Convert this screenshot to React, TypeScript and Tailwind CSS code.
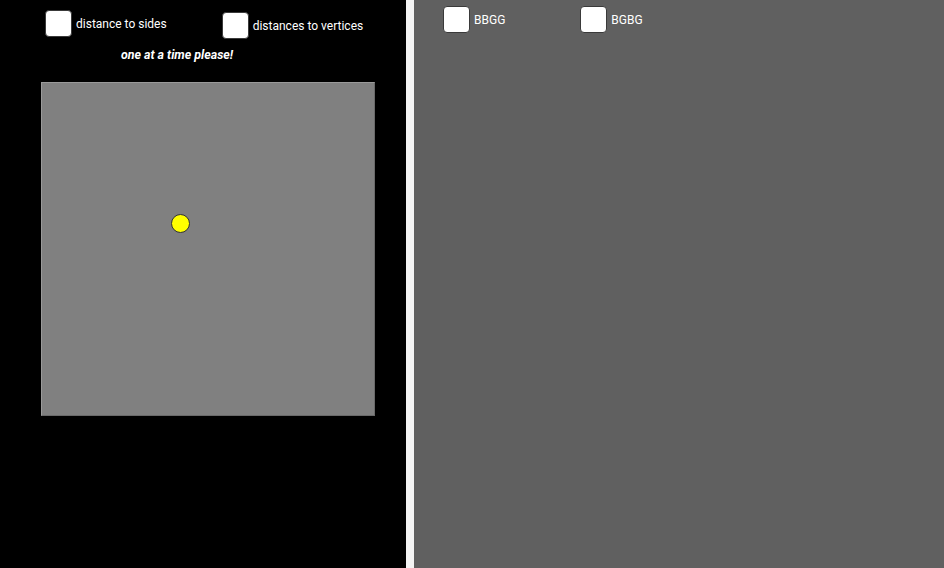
const font = { fontFamily: "Roboto, 'Liberation Sans', sans-serif" };

const Box = ({ label, className = "" }: { label: string; className?: string }) => (
  <label className={"flex items-center gap-[4px] " + className}>
    <span className="block w-[27px] h-[27px] rounded-[4px] bg-white border border-[#3a3a3a]" />
    <span className="text-[12px] leading-none text-white pt-[1px]">{label}</span>
  </label>
);

export default function App() {
  return (
    <div className="flex w-[944px] h-[568px] overflow-hidden" style={font}>
      {/* left panel */}
      <div className="w-[406px] h-full bg-black flex flex-col">
        <div className="flex items-start pl-[45px] pt-[10px]">
          <Box label="distance to sides" />
          <Box label="distances to vertices" className="ml-[55px] mt-[2px]" />
        </div>
        <div className="pl-[121px] mt-[10px] text-[12.4px] leading-none font-bold italic text-white">
          one at a time please!
        </div>
        <div className="relative ml-[41px] mt-[21px] w-[334px] h-[334px] bg-[#808080] border border-[#9a9a9a] border-b-[#6a6a6a] border-r-[#6a6a6a]">
          <span className="absolute left-[129px] top-[131px] w-[19px] h-[19px] rounded-full bg-[#ffff00] border border-[#333]" />
        </div>
      </div>
      {/* divider */}
      <div className="w-[8px] h-full bg-[#f4f4f4]" />
      {/* right panel */}
      <div className="flex-1 h-full bg-[#606060]">
        <div className="flex items-start pl-[29px] pt-[6px]">
          <Box label="BBGG" />
          <Box label="BGBG" className="ml-[75px]" />
        </div>
      </div>
    </div>
  );
}
